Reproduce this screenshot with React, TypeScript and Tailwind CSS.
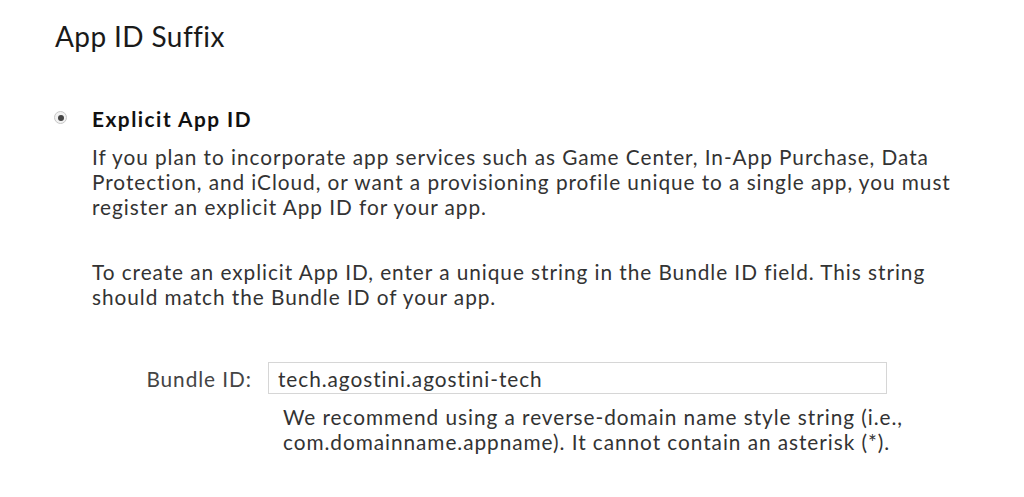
import React from "react";

function App() {
  return (
    <div
      className="min-h-[497px] w-[1024px] bg-white text-[#333]"
      style={{ fontFamily: 'Lato, "Open Sans", sans-serif' }}
    >
      <h2 className="pl-[55px] pt-[20px] text-[28px] leading-[32px] tracking-[0.4px] text-[#1a1a1a]">
        App ID Suffix
      </h2>

      <div className="mt-[54px] flex pl-[54px]">
        <div className="pt-[5px]">
          <span className="flex h-[13px] w-[13px] items-center justify-center rounded-full border border-[#c8c8c8] bg-[#f2f2f2]">
            <span className="h-[6px] w-[6px] rounded-full bg-[#444]" />
          </span>
        </div>
        <div className="ml-[25px] text-[20.8px] leading-[25px] tracking-[0.95px]">
          <h3 className="font-bold tracking-[1.5px] text-[#111]">Explicit App ID</h3>
          <p className="mt-[13px]">
            If you plan to incorporate app services such as Game Center, In-App Purchase, Data
            <br />
            Protection, and iCloud, or want a provisioning profile unique to a single app, you must
            <br />
            register an explicit App ID for your app.
          </p>
          <p className="mt-[40px]">
            To create an explicit App ID, enter a unique string in the Bundle ID field. This string
            <br />
            should match the Bundle ID of your app.
          </p>

          <div className="mt-[53px] flex items-center">
            <label htmlFor="bundle-id" className="w-[176px] pr-[16px] text-right text-[#444]">
              Bundle ID:
            </label>
            <input
              id="bundle-id"
              type="text"
              defaultValue="tech.agostini.agostini-tech"
              className="h-[32px] w-[619px] border border-[#d6d6d6] px-[9px] text-[#333] outline-none"
            />
          </div>
          <p className="ml-[191px] mt-[10px]">
            We recommend using a reverse-domain name style string (i.e.,
            <br />
            com.domainname.appname). It cannot contain an asterisk (*).
          </p>
        </div>
      </div>
    </div>
  );
}

export default App;
